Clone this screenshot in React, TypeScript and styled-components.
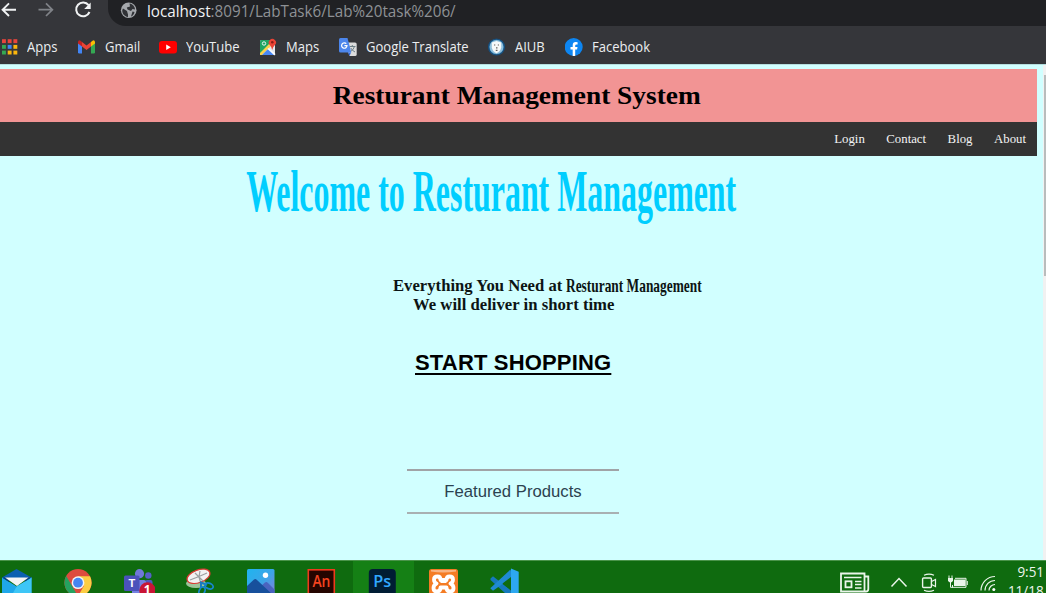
import React from "react";
import styled, { createGlobalStyle } from "styled-components";

const GlobalStyle = createGlobalStyle`
  *, *::before, *::after { box-sizing: border-box; }
  html, body { margin: 0; padding: 0; overflow: hidden; }
`;

const serif = `"Liberation Serif", "Times New Roman", serif`;
const arial = `"Liberation Sans", Arial, sans-serif`;
const ui = `"Open Sans", "Segoe UI", sans-serif`;

const Screen = styled.div`
  width: 1046px;
  height: 593px;
  display: flex;
  flex-direction: column;
  overflow: hidden;
`;

/* ---------- browser chrome ---------- */

const Toolbar = styled.div`
  height: 26px;
  flex: none;
  display: flex;
  background: #35363a;
`;

const NavButtons = styled.div`
  width: 108px;
  flex: none;
  height: 20px;
`;

const AddressBar = styled.div`
  flex: 1;
  display: flex;
  height: 26px;
  padding-left: 12px;
  background: #202124;
  border-bottom-left-radius: 18px;
`;

const Stretch = styled.span<{ $x: number; $origin?: string }>`
  display: inline-block;
  white-space: pre;
  transform: scaleX(${(p) => p.$x});
  transform-origin: ${(p) => p.$origin ?? "left"} center;
`;

const Url = styled.div`
  margin-left: 10px;
  font: 400 16.8px/21px ${ui};
  color: #8e9195;
  white-space: nowrap;
  b {
    font-weight: 400;
    color: #f1f3f4;
  }
`;

const Bookmarks = styled.div`
  height: 38px;
  flex: none;
  display: grid;
  grid-template-columns: 78px 81px 100px 80px 149px 77px 100px;
  align-items: center;
  background: #35363a;
`;

const Bookmark = styled.div`
  display: flex;
  align-items: center;
  gap: 9px;
  height: 38px;
  padding-top: 4px;
  svg { flex: none; }
`;

const BookmarkLabel = styled.span`
  font: 400 14.4px/20px ${ui};
  color: #eceef0;
  white-space: nowrap;
`;

/* ---------- web page ---------- */

const Viewport = styled.div`
  height: 496px;
  flex: none;
  display: flex;
  justify-content: space-between;
  background: #d1ffff;
  border-top: 1px solid #b4dede;
`;

const Page = styled.main`
  width: 1037px;
  padding-top: 4px;
  display: flex;
  flex-direction: column;
`;

const Banner = styled.header`
  height: 53px;
  display: flex;
  align-items: center;
  justify-content: center;
  background: #f29494;
`;

const SiteTitle = styled.h1`
  margin: 0 3px 0 0;
  font: 700 26px/34px ${serif};
  color: #000;
`;

const SiteNav = styled.nav`
  height: 34px;
  display: flex;
  align-items: center;
  justify-content: flex-end;
  gap: 21.5px;
  padding-right: 11px;
  background: #333;
`;

const NavLink = styled.a`
  font: 400 12.8px/16px ${serif};
  color: #f4f4f4;
`;

const Hero = styled.section`
  display: flex;
  flex-direction: column;
  align-items: center;
`;

const Welcome = styled.h2`
  margin: 1px 0 0;
  padding-right: 55px;
  font: 700 58.5px/70px ${serif};
  color: #00ceff;
`;

const Lead = styled.p`
  margin: 49px 0 0 393px;
  align-self: flex-start;
  height: 19px;
  display: flex;
  font: 700 16.4px/20px ${serif};
  color: #0c1414;
  white-space: pre;
`;

const LeadIntro = styled.span`
  width: 173px;
`;

const LeadName = styled.span`
  font: 700 19.5px/19px ${serif};
`;

const SubLead = styled.p`
  margin: 0 0 0 412.5px;
  align-self: flex-start;
  font: 700 16.5px/20px ${serif};
  color: #0c1414;
`;

const ShopLink = styled.a`
  margin: 35px 0 0 415px;
  align-self: flex-start;
  font: 700 22px/26px ${arial};
  letter-spacing: 0.17px;
  color: #000;
  text-decoration: underline;
  text-decoration-thickness: 2px;
  text-underline-offset: 3px;
`;

const Featured = styled.h3`
  width: 212px;
  height: 45px;
  margin: 93px 0 0 407px;
  align-self: flex-start;
  display: flex;
  justify-content: center;
  border-top: 2px solid #a0a3a6;
  border-bottom: 2px solid #a9b0b2;
  font: 400 16.7px/42px ${arial};
  color: #2c4250;
`;

const ScrollTrack = styled.div`
  width: 3px;
  padding-top: 10px;
  background: #f1f1f1;
`;

const ScrollThumb = styled.div`
  height: 201px;
  margin-left: 1px;
  background: #b9bcbc;
`;

/* ---------- taskbar ---------- */

const Taskbar = styled.footer`
  height: 33px;
  flex: none;
  display: flex;
  justify-content: space-between;
  background: #0f6b0f;
  border-top: 1px solid #4a944a;
  overflow: hidden;
`;

const Apps = styled.div`
  display: flex;
  margin-left: -13px;
`;

const AppCell = styled.div<{ $active?: boolean }>`
  width: 61px;
  height: 40px;
  flex: none;
  display: flex;
  justify-content: center;
  padding: 7px 1px 0 0;
  background: ${(p) => (p.$active ? "#158015" : "transparent")};
`;

const Tray = styled.div`
  display: grid;
  grid-template-columns: 168px 38px;
`;

const Clock = styled.div`
  display: flex;
  flex-direction: column;
  align-items: flex-end;
  padding: 2px 2px 0 0;
  font: 400 14.2px/18px ${ui};
  color: #eef6ee;
  white-space: nowrap;
`;

const ClockLine = styled.span`
  height: 19px;
`;

/* ---------- drawings ---------- */

const NavIcons = () => (
  <svg width="108" height="26" viewBox="0 0 108 26" fill="none">
    <path d="M16 9.7H3M9 3.4L2.6 9.7L9 16" stroke="#f1f3f4" strokeWidth="1.9" />
    <path d="M38.5 9.7H52M46 3.4L52.4 9.7L46 16" stroke="#808388" strokeWidth="1.7" />
    <path d="M88.6 5.2A6.9 6.9 0 1 0 89.5 12" stroke="#f1f3f4" strokeWidth="2" />
    <path d="M90.7 2.5V9H84.2Z" fill="#f1f3f4" />
  </svg>
);

const Globe = () => (
  <svg width="17" height="22" viewBox="0 0 17 22">
    <circle cx="8.7" cy="10.3" r="7.8" fill="#a5a8ac" />
    <path d="M3 8.5L7 11L8 14.5V17C4 16.5 2 13 2.3 10ZM9.5 3.5C13 4 15 7 15 9.5L12.5 9L11 11L7.5 9.5L6.8 7.5L10 6.5ZM12.5 11.5L14.5 12C14 14.5 12.5 16 11 16.5Z" fill="#303236" />
  </svg>
);

const AppsGrid = () => {
  const colors = ["#e8453c", "#e8453c", "#e8453c", "#34a853", "#4285f4", "#fbb60d", "#34a853", "#fbb60d", "#fbb60d"];
  return (
    <svg width="18" height="18" viewBox="0 0 18 18">
      {colors.map((c, i) => (
        <rect key={i} x={2 + (i % 3) * 5.7} y={1.2 + Math.floor(i / 3) * 5.7} width="3.9" height="3.9" fill={c} />
      ))}
    </svg>
  );
};

const GmailIcon = () => (
  <svg width="18" height="18" viewBox="0 0 18 18">
    <path d="M0 4.5L4 7.2V15.5H1.2Q0 15.5 0 14.3Z" fill="#4285f4" />
    <path d="M13 7.2L17 4.5V14.3Q17 15.5 15.8 15.5H13Z" fill="#34a853" />
    <path d="M13 4V8.5L17 5.5V4Q16.5 1.5 14.5 2.8Z" fill="#fbbc04" />
    <path d="M4 8.5V4L8.5 7.4L13 4V8.5L8.5 12Z" fill="#ea4335" />
    <path d="M0 4V5.5L4 8.5V4L2.5 2.8Q.5 1.5 0 4Z" fill="#c5221f" />
  </svg>
);

const YouTubeIcon = () => (
  <svg width="18" height="18" viewBox="0 0 18 18">
    <rect x="0" y="3" width="18" height="12.6" rx="3" fill="#f00" />
    <path d="M7.2 6.5L11.8 9.3L7.2 12.1Z" fill="#fff" />
  </svg>
);

const MapsIcon = () => (
  <svg width="18" height="18" viewBox="0 0 18 18">
    <rect x="1" y="2" width="15" height="15" rx="1.5" fill="#e5e8eb" />
    <path d="M1 3.5Q1 2 2.5 2H12L10 9L1 17Z" fill="#1fa463" />
    <path d="M1 15L10 6L12 8L3 17H1Z" fill="#fbd24b" />
    <path d="M3 17L9.5 10.5L15.5 17Z" fill="#4a89f4" />
    <path d="M8.5 11L9.5 10L16.5 16L15.5 17.5Z" fill="#fff" />
    <circle cx="5" cy="5.5" r="1.7" fill="none" stroke="#fff" strokeWidth=".9" />
    <path d="M13.2 12Q12.8 9 10.8 7A3.6 3.6 0 1 1 15.9 7Q13.7 9 13.2 12Z" fill="#ea4335" />
    <circle cx="13.3" cy="4.3" r="1.3" fill="#8c1d17" />
  </svg>
);

const TranslateIcon = () => (
  <svg width="18" height="18" viewBox="0 0 18 18">
    <path d="M6 4.5H16Q17.7 4.5 17.7 6V16.5Q17.7 18 16 18H10.5Z" fill="#dcdcdc" />
    <path d="M10.5 8.5H16.5M13.3 7V8.5M15.5 8.5Q14.5 12 11 14M11.8 10Q13 12.5 16 14" stroke="#6c7f86" strokeWidth="1" fill="none" />
    <path d="M9 14.5H12L10.5 18Z" fill="#3367d6" />
    <path d="M1.5 0H8.5L12.3 14.5H1.5Q0 14.5 0 13V1.5Q0 0 1.5 0Z" fill="#4c86ec" />
    <path d="M7.3 5.7A2.7 2.7 0 1 0 8 7.6H5.4" stroke="#fff" strokeWidth="1.2" fill="none" />
  </svg>
);

const AiubIcon = () => (
  <svg width="18" height="18" viewBox="0 0 18 18">
    <circle cx="8.5" cy="9" r="8" fill="#2d76a8" stroke="#174d7b" strokeWidth="1.2" />
    <circle cx="8.5" cy="9" r="6.9" fill="#8fc0dc" />
    <path d="M3.8 4.5L8.5 3L13.2 4.5V9.5Q12.5 13.5 8.5 15.3Q4.5 13.5 3.8 9.5Z" fill="#f7fafa" />
    <path d="M6 7H7.3M9.8 7H11M8 9.8H9.5M7.8 12.3H9.5" stroke="#67615c" strokeWidth="1.2" />
  </svg>
);

const FacebookIcon = () => (
  <svg width="18" height="18" viewBox="0 0 18 18">
    <circle cx="8.7" cy="9" r="9" fill="#0d86f2" />
    <path d="M7.7 18V11.5H5.5V9H7.7V7.3Q7.7 4.1 10.8 4.1L12.6 4.3V6.4H11.5Q10.2 6.4 10.2 7.6V9H12.5L12.1 11.5H10.2V18Z" fill="#fff" />
  </svg>
);

const AppSvg = ({ children }: { children: React.ReactNode }) => (
  <svg width="32" height="32" viewBox="0 0 32 32">{children}</svg>
);

const MailIcon = () => (
  <AppSvg>
    <path d="M1 9.5L15.5 1L30.5 9.5V12H1Z" fill="#0b5fb0" />
    <path d="M1 9.5L15.7 18.5L30.5 9.5V32H1Z" fill="#1fa8ea" />
    <path d="M15.7 18.5L30.5 9.5V32H8Z" fill="#3ec6f6" />
    <path d="M1 9.5L8 14V9.5ZM30.5 9.5L24 13.5V9.5Z" fill="#07417f" />
    <path d="M4 9.5H27.5L16 18Z" fill="#f4f4f4" />
  </AppSvg>
);

const ChromeIcon = () => (
  <AppSvg>
    <circle cx="16" cy="14.7" r="13.6" fill="#dd4b3e" />
    <path d="M4.2 8L10.1 18L16 28.3A13.6 13.6 0 0 1 4.2 8Z" fill="#25a260" />
    <path d="M16 8.3H28A13.6 13.6 0 0 1 16 28.3L21.8 18Z" fill="#fccd43" />
    <circle cx="16" cy="14.7" r="6.4" fill="#f4f4f4" />
    <circle cx="16" cy="14.7" r="4.9" fill="#4585f2" />
  </AppSvg>
);

const TeamsIcon = () => (
  <AppSvg>
    <circle cx="16.5" cy="5.7" r="4.6" fill="#7078d8" />
    <circle cx="25.3" cy="7.5" r="3.2" fill="#5660c7" />
    <rect x="22" y="12" width="7.5" height="14" rx="2" fill="#4f58c0" />
    <rect x="9" y="12" width="14" height="16" rx="2" fill="#7580e0" />
    <rect x="1" y="7.5" width="15.5" height="15.5" rx="1.5" fill="#4b52bb" />
    <text x="8.8" y="19" textAnchor="middle" fontFamily={arial} fontWeight="700" fontSize="11" fill="#fff">T</text>
    <circle cx="24.5" cy="22.5" r="8.2" fill="#c91535" />
    <text x="24.3" y="26" textAnchor="middle" fontFamily={ui} fontWeight="700" fontSize="12" fill="#fff">1</text>
  </AppSvg>
);

const SnipIcon = () => (
  <AppSvg>
    <ellipse cx="12" cy="15.5" rx="10" ry="4.5" fill="#9cc59a" />
    <ellipse cx="14.5" cy="8.3" rx="12" ry="6.3" transform="rotate(-20 14.5 8.3)" fill="#f2f2f2" stroke="#d83c32" strokeWidth="1.2" />
    <path d="M16 3L15 9L17 16M6 12L15 8.5L23 5M11 5L19 13" stroke="#9b9fa0" strokeWidth="1.2" fill="none" />
    <path d="M16 14L23 17M17 14L17 20" stroke="#1c7bbd" strokeWidth="2" />
    <ellipse cx="25" cy="18" rx="4.3" ry="2.8" transform="rotate(20 25 18)" fill="none" stroke="#1787cf" strokeWidth="1.8" />
    <ellipse cx="18" cy="23" rx="2.8" ry="4.3" transform="rotate(25 18 23)" fill="none" stroke="#1787cf" strokeWidth="1.8" />
  </AppSvg>
);

const PhotosIcon = () => (
  <AppSvg>
    <defs>
      <linearGradient id="sky" x1="0" y1="0" x2="1" y2="1">
        <stop offset="0" stopColor="#1fb4ef" />
        <stop offset=".5" stopColor="#3ba5e8" />
        <stop offset="1" stopColor="#8d79d6" />
      </linearGradient>
    </defs>
    <rect x="2" y="1" width="27.5" height="29" rx="1.5" fill="url(#sky)" />
    <path d="M14 20L20 14.5Q21.5 13.5 23 15L29.5 21.5V32H14Z" fill="#4a64bf" />
    <path d="M2 18L9 11.5Q10.5 10.5 12 12L28 27V32H2Z" fill="#17509c" />
    <circle cx="20.5" cy="7.3" r="2.7" fill="#fff" />
  </AppSvg>
);

const AnimateIcon = () => (
  <AppSvg>
    <rect x="2.3" y="1.8" width="26" height="26" fill="#250500" stroke="#f03a1c" strokeWidth="1.6" />
    <text x="15.4" y="19" textAnchor="middle" fontFamily={ui} fontWeight="600" fontSize="16.5" textLength="18" lengthAdjust="spacingAndGlyphs" fill="#f4431f">An</text>
  </AppSvg>
);

const PhotoshopIcon = () => (
  <AppSvg>
    <rect x="1.8" y="1" width="27" height="28" rx="4" fill="#001d34" />
    <text x="15.3" y="19" textAnchor="middle" fontFamily={ui} fontWeight="600" fontSize="16.5" textLength="18" lengthAdjust="spacingAndGlyphs" fill="#31a8ff">Ps</text>
  </AppSvg>
);

const XamppIcon = () => (
  <AppSvg>
    <rect x="1" y="1" width="29" height="30" rx="2.5" fill="#f47c24" />
    <path d="M3 2H28V3.5Q15 5.500 3 3.5Z" fill="#f9b483" />
    <path d="M12.5 13H18.5M9.5 8.5Q6 8.5 6 11.5Q6 14.5 8.5 15.5Q5.5 17 5.5 20Q5.5 23.5 9 23.5Q12.5 23.5 12.5 19.5H18.5Q18.5 23.5 22 23.5Q25.5 23.5 25.5 20Q25.5 17 22.5 15.5Q25 14.5 25 11.5Q25 8.5 21.5 8.5Q18.5 8.5 18.5 12H12.5Q12.5 8.5 9.5 8.5Z" fill="none" stroke="#fff" strokeWidth="3.8" strokeLinejoin="round" />
  </AppSvg>
);

const CodeIcon = () => (
  <AppSvg>
    <path d="M1.5 10.5L4 8.2L24.5 24.5V31L21.5 30L1.5 12Z" fill="#1679bd" />
    <path d="M1.5 20L21.5 1.5L23.5 9L4 22.8L1.5 20.5Z" fill="#1f8ad2" />
    <path d="M22 .5L29.7 3.7V27L22 30.5Z" fill="#2da8f0" />
    <path d="M22 9L13.5 15.5L22 22Z" fill="#0f6b0f" />
  </AppSvg>
);

const TrayIcons = () => (
  <svg width="168" height="32" viewBox="840 561 168 32" fill="none" stroke="#eaf5ea">
    <path d="M841 573.5H864.5V591.5H841ZM864.5 576.5H868.3V589Q868.3 591.5 866 591.5H864" strokeWidth="1.8" />
    <path d="M844 577.5H861.5M855 581.5H861.5M855 584.5H861.5M855 588H861.5" strokeWidth="1.6" />
    <rect x="845.5" y="581.3" width="6" height="6" strokeWidth="1.8" />
    <path d="M891.5 586.5L899 578.5L906.5 586.5" strokeWidth="1.5" />
    <rect x="922.6" y="578" width="8.8" height="9.5" rx="1" strokeWidth="1.4" />
    <path d="M931.5 581.5L935.5 579.5V586.5L931.5 584.5M924 575.2Q929 573 934 575.2M924 590.2Q929 592.5 934 590.2" strokeWidth="1.2" />
    <rect x="954" y="579.5" width="11.5" height="6.5" fill="#eaf5ea" strokeWidth="0" />
    <path d="M955 578.3H966V587.3H952.5V585M967.3 581V585" strokeWidth="1" />
    <path d="M949 575.5V578.5M952 575.5V578.5M950.5 582V587.3H953" strokeWidth="1" />
    <path d="M948 578H953V580.5Q952.5 582.5 950.5 582.5Q948.5 582.5 948 580.5Z" fill="#eaf5ea" strokeWidth="0" />
    <path d="M981 590.5A14 14 0 0 1 995 576.5M985 590.5A10 10 0 0 1 995 580.5M989 590.5A6 6 0 0 1 995 584.5" strokeWidth="1.2" />
    <circle cx="993.8" cy="589.5" r="1.5" fill="#fff" strokeWidth="0" />
  </svg>
);

const bookmarks = [
  { label: "Apps", icon: <AppsGrid /> },
  { label: "Gmail", icon: <GmailIcon /> },
  { label: "YouTube", icon: <YouTubeIcon /> },
  { label: "Maps", icon: <MapsIcon /> },
  { label: "Google Translate", icon: <TranslateIcon /> },
  { label: "AIUB", icon: <AiubIcon /> },
  { label: "Facebook", icon: <FacebookIcon /> },
];

const apps = [
  { name: "mail", icon: <MailIcon /> },
  { name: "chrome", icon: <ChromeIcon /> },
  { name: "teams", icon: <TeamsIcon /> },
  { name: "snip", icon: <SnipIcon /> },
  { name: "photos", icon: <PhotosIcon /> },
  { name: "animate", icon: <AnimateIcon /> },
  { name: "photoshop", icon: <PhotoshopIcon />, active: true },
  { name: "xampp", icon: <XamppIcon /> },
  { name: "code", icon: <CodeIcon /> },
];

export default function App() {
  return (
    <Screen>
      <GlobalStyle />
      <Toolbar>
        <NavButtons><NavIcons /></NavButtons>
        <AddressBar>
          <Globe />
          <Url>
            <Stretch $x={0.905}><b>localhost</b>:8091/LabTask6/Lab%20task%206/</Stretch>
          </Url>
        </AddressBar>
      </Toolbar>
      <Bookmarks>
        {bookmarks.map((b) => (
          <Bookmark key={b.label}>
            {b.icon}
            <BookmarkLabel><Stretch $x={0.905}>{b.label}</Stretch></BookmarkLabel>
          </Bookmark>
        ))}
      </Bookmarks>
      <Viewport>
        <Page>
          <Banner>
            <SiteTitle><Stretch $x={1.053} $origin="center">Resturant Management System</Stretch></SiteTitle>
          </Banner>
          <SiteNav>
            {["Login", "Contact", "Blog", "About"].map((t) => <NavLink key={t}>{t}</NavLink>)}
          </SiteNav>
          <Hero>
            <Welcome><Stretch $x={0.5455} $origin="center">Welcome to Resturant Management</Stretch></Welcome>
            <Lead>
              <LeadIntro><Stretch $x={1.017}>Everything You Need at</Stretch></LeadIntro>
              <LeadName><Stretch $x={0.686}>Resturant Management</Stretch></LeadName>
            </Lead>
            <SubLead><Stretch $x={1.012}>We will deliver in short time</Stretch></SubLead>
            <ShopLink>START SHOPPING</ShopLink>
            <Featured>Featured Products</Featured>
          </Hero>
        </Page>
        <ScrollTrack><ScrollThumb /></ScrollTrack>
      </Viewport>
      <Taskbar>
        <Apps>
          {apps.map((a) => <AppCell key={a.name} $active={a.active}>{a.icon}</AppCell>)}
        </Apps>
        <Tray>
          <TrayIcons />
          <Clock>
            <ClockLine><Stretch $x={0.95} $origin="right">9:51</Stretch></ClockLine>
            <ClockLine><Stretch $x={0.95} $origin="right">11/18</Stretch></ClockLine>
          </Clock>
        </Tray>
      </Taskbar>
    </Screen>
  );
}
